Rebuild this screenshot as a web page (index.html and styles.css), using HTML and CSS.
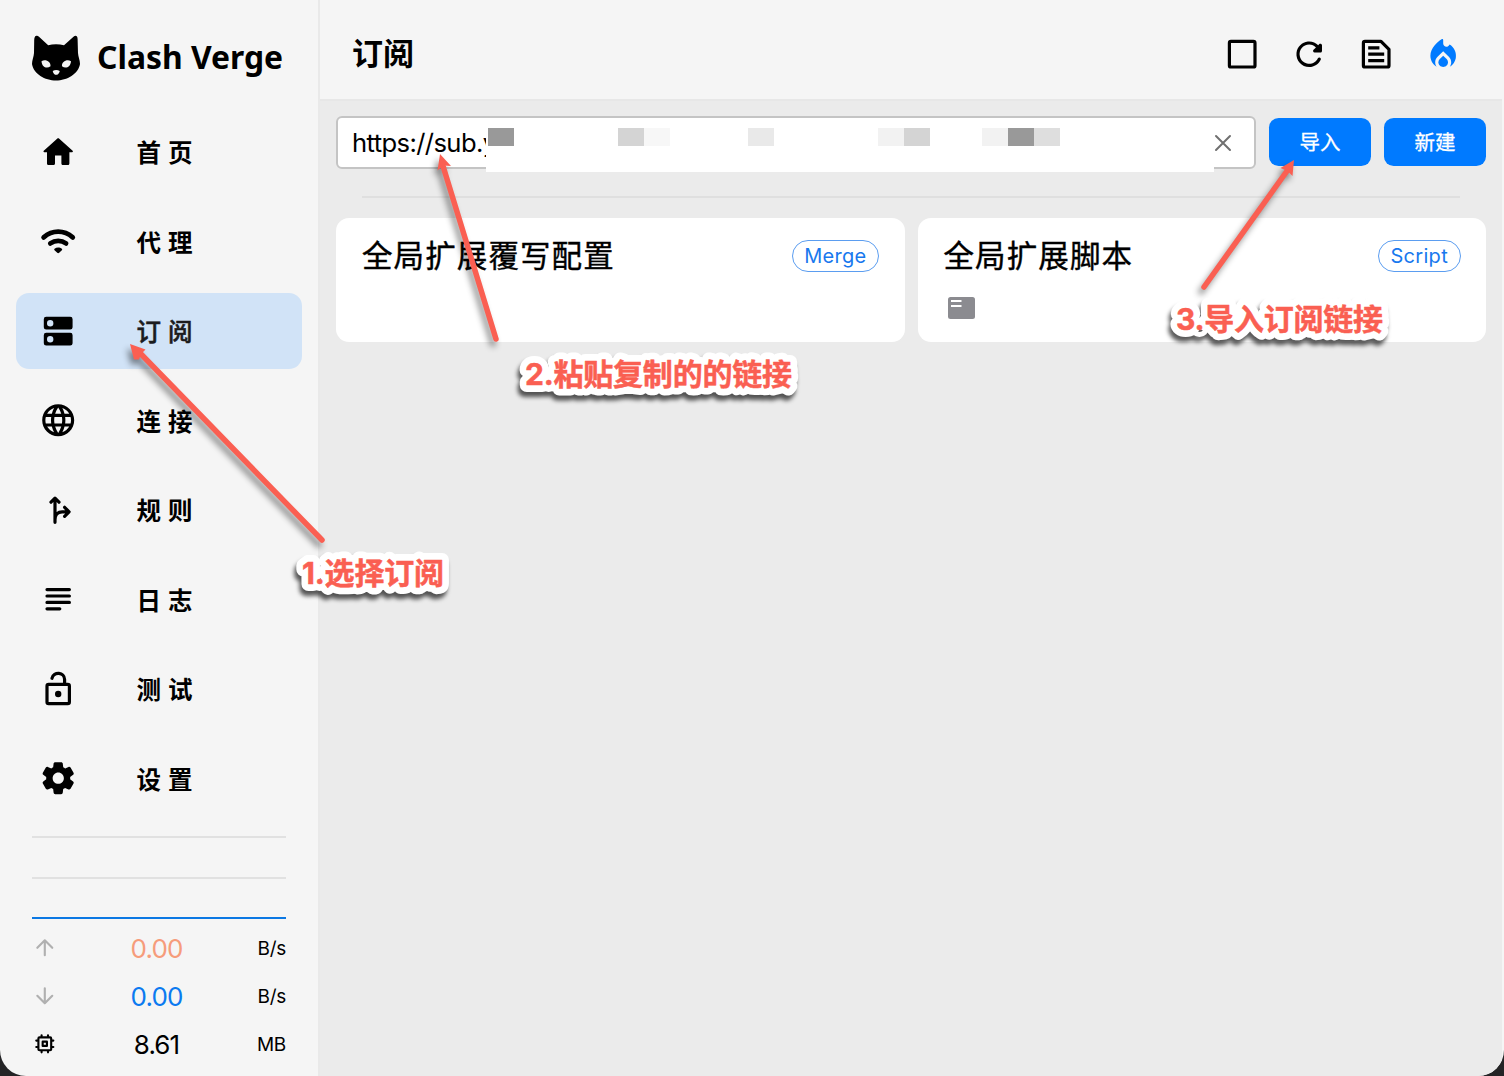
FILE: index.html
```
<!DOCTYPE html>
<html lang="zh-CN">
<head>
    <meta charset="UTF-8">
    <meta name="viewport" content="width=device-width, initial-scale=1.0">
    <title>Clash Verge - 订阅</title>
    <link rel="stylesheet" href="styles.css">
</head>
<body>
<div class="app">
    <aside class="sidebar">
        <div class="logo">
            <svg class="logo-cat" viewBox="0 0 48 46">
                <path d="M5 .8C3 .4 2.400 2.500 2.200 5L2 18C1.800 22 0 25 0 29C1.500 39 13 45.500 24 45.500S46.500 39 48 29C48 25 46.200 22 46 18L45.600 4C45.500 .8 43.500 0 41.500 1.800L32 10.200C27 8.900 21 8.900 16.200 10.200L7 1.800C6.300 1.200 5.600 .8 5 .8Z"/>
                <path class="eye" d="M9.500 26.200C13.500 23.900 19 26.500 18.500 31.300C15 34 10 32.500 9.500 26.200ZM39 26.200C35 23.900 29.500 26.500 30 31.300C33.500 34 38.500 32.500 39 26.200ZM20.700 36C23 34.700 25.500 34.700 27.800 36C27.200 39 25.500 39.800 24.200 39.800S21.200 39 20.700 36Z"/>
            </svg>
            <svg class="logo-name" viewBox="0 0 200 50"><text x="0" y="34" textLength="186" lengthAdjust="spacingAndGlyphs">Clash Verge</text></svg>
        </div>

        <nav class="menu">
            <a class="menu-item">
                <svg class="icon" viewBox="0 0 24 24"><path d="M10 19v-5h4v5c0 .55.45 1 1 1h3c.55 0 1-.45 1-1v-7h1.700c.46 0 .68-.57.33-.87L12.670 3.600c-.38-.34-.96-.34-1.340 0l-8.360 7.530c-.34.3-.13.87.33.87H5v7c0 .55.45 1 1 1h3c.55 0 1-.45 1-1z"/></svg>
                <span>首页</span>
            </a>
            <a class="menu-item">
                <svg class="icon" viewBox="0 0 24 24"><path class="line wide" d="M2.900 9.600C8.400 4.900 15.600 4.900 21.100 9.600M7.100 13.400C10 11.200 14 11.200 16.900 13.400"/><path d="M9.700 16.700c1.300-1.100 3.300-1.100 4.600 0 .3.3.3.600 0 .9l-1.700 1.700c-.4.400-.8.400-1.200 0l-1.700-1.700c-.3-.3-.3-.6 0-.9z"/></svg>
                <span>代理</span>
            </a>
            <a class="menu-item active">
                <svg class="icon" viewBox="0 0 24 24"><path fill-rule="evenodd" d="M4.500 3h15A1.500 1.500 0 0 1 21 4.500v5a1.500 1.500 0 0 1-1.500 1.500h-15A1.500 1.500 0 0 1 3 9.500v-5A1.500 1.500 0 0 1 4.500 3zM7 5a2 2 0 1 0 0 4 2 2 0 0 0 0-4zM4.500 13h15a1.500 1.500 0 0 1 1.500 1.500v5a1.500 1.500 0 0 1-1.500 1.500h-15A1.500 1.500 0 0 1 3 19.500v-5A1.500 1.500 0 0 1 4.500 13zM7 15a2 2 0 1 0 0 4 2 2 0 0 0 0-4z"/></svg>
                <span>订阅</span>
            </a>
            <a class="menu-item">
                <svg class="icon" viewBox="0 0 24 24"><path d="M11.990 2C6.470 2 2 6.480 2 12s4.470 10 9.990 10C17.520 22 22 17.520 22 12S17.520 2 11.990 2zm6.930 6h-2.950c-.32-1.250-.78-2.450-1.380-3.560 1.840.63 3.370 1.910 4.330 3.560zM12 4.040c.83 1.200 1.480 2.530 1.910 3.960h-3.820c.43-1.430 1.080-2.760 1.910-3.960zM4.260 14C4.100 13.360 4 12.690 4 12s.1-1.360.26-2h3.380c-.08.66-.14 1.320-.14 2s.06 1.340.14 2H4.260zm.82 2h2.950c.32 1.250.78 2.450 1.380 3.560-1.840-.63-3.370-1.900-4.330-3.560zm2.950-8H5.080c.96-1.660 2.490-2.930 4.330-3.560C8.810 5.550 8.350 6.750 8.030 8zM12 19.960c-.83-1.200-1.480-2.530-1.910-3.960h3.820c-.43 1.430-1.080 2.760-1.910 3.960zM14.340 14H9.660c-.09-.66-.16-1.320-.16-2s.07-1.350.16-2h4.680c.09.65.16 1.320.16 2s-.07 1.340-.16 2zm.25 5.560c.6-1.110 1.060-2.310 1.380-3.560h2.950c-.96 1.650-2.490 2.930-4.330 3.560zM16.360 14c.08-.66.14-1.320.14-2s-.06-1.340-.14-2h3.380c.16.64.26 1.310.26 2s-.1 1.360-.26 2h-3.380z"/></svg>
                <span>连接</span>
            </a>
            <a class="menu-item">
                <svg class="icon" viewBox="0 0 24 24"><path class="line" d="M10 19.600V5.200M7.500 7L10 4.500 12.500 7M10 18C10 14.500 12 13 14.500 13H18M16 10.200L18.800 13 16 15.800"/></svg>
                <span>规则</span>
            </a>
            <a class="menu-item">
                <svg class="icon" viewBox="0 0 24 24"><path class="line" d="M5 6H19M5 10H19M5 14H19M5 18H13"/></svg>
                <span>日志</span>
            </a>
            <a class="menu-item">
                <svg class="icon" viewBox="0 0 24 24"><rect class="line" x="5" y="9" width="14" height="12" rx="1"/><path class="line" d="M8.100 5.200C9.200 .8 16 1.200 16 6V9"/><circle cx="12" cy="15" r="2"/></svg>
                <span>测试</span>
            </a>
            <a class="menu-item">
                <svg class="icon" viewBox="0 0 24 24"><path d="M19.500 12c0-.23-.01-.45-.03-.68l1.860-1.410c.4-.3.510-.86.26-1.300l-1.870-3.230c-.25-.44-.79-.62-1.250-.42l-2.150.91c-.37-.26-.76-.49-1.170-.68l-.29-2.310c-.06-.5-.49-.88-.99-.88h-3.730c-.51 0-.94.38-1 .88l-.29 2.310c-.41.190-.8.420-1.170.68l-2.150-.91c-.46-.2-1-.02-1.250.42L2.410 8.620c-.25.440-.14.990.26 1.300l1.860 1.410c-.02.22-.03.44-.03.67s.01.450.03.68l-1.860 1.410c-.4.3-.51.860-.26 1.300l1.870 3.230c.25.44.79.62 1.250.42l2.150-.91c.37.26.76.49 1.170.68l.29 2.310c.06.5.49.88.99.88h3.730c.5 0 .93-.38.990-.88l.29-2.310c.41-.19.8-.42 1.170-.68l2.150.91c.46.2 1 .02 1.250-.42l1.870-3.230c.25-.44.140-.99-.26-1.300l-1.860-1.410c.03-.23.04-.45.04-.68zm-7.460 3.500c-1.930 0-3.500-1.570-3.500-3.500s1.570-3.500 3.500-3.500 3.500 1.570 3.500 3.500-1.570 3.500-3.500 3.500z"/></svg>
                <span>设置</span>
            </a>
        </nav>

        <div class="traffic">
            <div class="graph"></div>
            <div class="traffic-row">
                <svg class="small-icon muted" viewBox="0 0 24 24"><path class="line" d="M12 19V5M5 12L12 5 19 12"/></svg>
                <span class="value up">0.00</span>
                <span class="unit">B/s</span>
            </div>
            <div class="traffic-row">
                <svg class="small-icon muted" viewBox="0 0 24 24"><path class="line" d="M12 5V19M5 12L12 19 19 12"/></svg>
                <span class="value down">0.00</span>
                <span class="unit">B/s</span>
            </div>
            <div class="traffic-row">
                <svg class="small-icon" viewBox="0 0 24 24"><rect class="line" x="6" y="6" width="12" height="12" rx="1"/><rect class="line" x="10" y="10" width="4" height="4"/><path class="line" d="M9 5V4M15 5V4M9 20V19M15 20V19M4 9H5M4 15H5M19 9H20M19 15H20"/></svg>
                <span class="value">8.61</span>
                <span class="unit">MB</span>
            </div>
        </div>
    </aside>

    <main class="content">
        <header class="header">
            <h1>订阅</h1>
            <div class="actions">
                <svg class="icon" viewBox="0 0 24 24"><rect class="line" x="4" y="4" width="16" height="16" rx="1"/></svg>
                <svg class="icon" viewBox="0 0 24 24"><path d="M17.650 6.350c-1.630-1.630-3.940-2.570-6.480-2.310-3.670.37-6.690 3.350-7.100 7.020C3.520 15.910 7.270 20 12 20c3.190 0 5.930-1.870 7.210-4.560.32-.67-.16-1.440-.9-1.440-.37 0-.72.2-.88.53-1.130 2.430-3.840 3.970-6.800 3.310-2.220-.49-4.010-2.300-4.480-4.520C5.310 9.440 8.260 6 12 6c1.660 0 3.140.69 4.220 1.780l-1.510 1.510c-.63.63-.19 1.710.7 1.710H19c.55 0 1-.45 1-1V6.410c0-.89-1.080-1.340-1.710-.71l-.64.65z"/></svg>
                <svg class="icon" viewBox="0 0 24 24"><path class="line" d="M5 4H15L20 9V19Q20 20 19 20H5Q4 20 4 19V5Q4 4 5 4Z"/><path class="line flat" d="M7 8H14M7 12H17M7 16H17"/></svg>
                <svg class="icon blue" viewBox="0 0 24 24"><path d="M12 12.900l-2.130 2.090C9.310 15.550 9 16.280 9 17.060 9 18.680 10.350 20 12 20s3-1.320 3-2.940c0-.78-.31-1.520-.87-2.070L12 12.900z"/><path d="M16 6l-.44.55C14.380 8.020 12 7.190 12 5.300V3.200c0-.7-.5-.9-1-.6C8.600 4.200 4 7.800 4 13c0 2.920 1.560 5.470 3.890 6.860-.56-.79-.89-1.760-.89-2.800 0-1.320.52-2.560 1.470-3.500L12 10.100l3.530 3.470c.95.93 1.470 2.170 1.470 3.500 0 1.020-.31 1.960-.85 2.750 1.890-1.150 3.290-3.060 3.710-5.300.66-3.550-1.070-6.900-3.860-8.520z"/></svg>
            </div>
        </header>

        <section class="import-bar">
            <div class="url-box">
                <span class="url">https://sub.y</span>
                <svg class="clear" viewBox="0 0 24 24"><path class="line" d="M5 5L19 19M19 5L5 19"/></svg>
                <div class="mosaic">
                    <i class="c1 g1"></i><i class="c6 g2"></i><i class="c7 g5"></i><i class="c11 g3"></i><i class="c16 g4"></i><i class="c17 g2"></i><i class="c20 g4"></i><i class="c21 g1"></i><i class="c22 g6"></i>
                </div>
            </div>
            <button class="btn">导入</button>
            <button class="btn">新建</button>
        </section>

        <hr class="divider">

        <section class="cards">
            <div class="card">
                <div class="card-top">
                    <h2>全局扩展覆写配置</h2>
                    <span class="tag">Merge</span>
                </div>
            </div>
            <div class="card">
                <div class="card-top">
                    <h2>全局扩展脚本</h2>
                    <span class="tag">Script</span>
                </div>
                <svg class="card-icon" viewBox="0 0 27 22"><rect width="27" height="22" rx="2.500"/><path class="bars" d="M3 4H13.500M3 9H13.500"/></svg>
            </div>
        </section>
    </main>

    <!-- tutorial notes over the window -->
    <svg class="notes" viewBox="0 0 1504 1076">
        <g class="arrow">
            <path class="shaft" d="M322 540L140 353"/>
            <path d="M130 344L145.500 349.500 141 354 139 359.500 134 359.500Z"/>
            <path class="shaft" d="M496 339L443 166"/>
            <path d="M440 154L451 166 443.500 165.500 437.500 170.500Z"/>
            <path class="shaft" d="M1204 287L1287 171"/>
            <path d="M1294 160L1292.500 176 1287.500 171 1280.500 168Z"/>
        </g>
        <!-- white halo first, the letters themselves on top -->
        <use class="halo" href="#labels"/>
        <g id="labels">
            <text x="302" y="584" textLength="142">1.选择订阅</text>
            <text x="525" y="385" textLength="267">2.粘贴复制的的链接</text>
            <text x="1176" y="330" textLength="207">3.导入订阅链接</text>
        </g>
    </svg>
</div>
</body>
</html>
```
FILE: styles.css
```
* { box-sizing: border-box; }
body {
    margin: 0;
    background: #242426;
    color: #000;
    font-family: Inter, "Noto Sans CJK SC", sans-serif;
}
.app {
    position: relative;
    display: flex;
    width: 1504px;
    height: 1076px;
    background: #f5f5f5;
    border-radius: 0 0 26px 26px;
    overflow: hidden;
}
svg { display: block; flex: none; }
.line {
    fill: none;
    stroke: currentColor;
    stroke-width: 2;
    stroke-linecap: round;
    stroke-linejoin: round;
}
.line.wide { stroke-width: 3; }
.line.flat { stroke-linecap: butt; }
.icon { width: 38.4px; height: 38.4px; fill: currentColor; }
.blue { color: #007aff; }

/* sidebar */
.sidebar {
    width: 320px;
    border-right: 2px solid #e9e9e9;
    display: flex;
    flex-direction: column;
}
.logo { display: flex; height: 114px; padding: 34.5px 0 0 32px; }
.logo-cat { width: 48px; height: 46px; }
.logo-cat .eye { fill: #f5f5f5; }
.logo-name { width: 200px; height: 50px; margin-left: 16.5px; overflow: visible; }
.logo-name text { font: bold 33px "Noto Sans", sans-serif; }
.menu {
    display: flex;
    flex-direction: column;
    gap: 13.5px;
    padding: 0 16px;
}
.menu-item {
    display: flex;
    align-items: center;
    height: 76px;
    padding-left: 23px;
    border-radius: 13px;
}
.menu-item span {
    margin-left: 59px;
    padding-top: 2px;
    font-size: 24.500px;
    font-weight: 700;
    letter-spacing: 7px;
    line-height: 36px;
}
.menu-item.active { background: #d1e3f7; }
.menu-item.active span {
    color: #1c1c1e;
    font-weight: 500;
    -webkit-text-stroke: 0.5px #1c1c1e;
}

.traffic { margin: 19.5px 32px 0; }
.graph {
    height: 83px;
    border-top: 2px solid #e1e1e1;
    border-bottom: 2px solid #0b78e3;
    background: linear-gradient(#e1e1e1, #e1e1e1) 0 39px / 100% 2px no-repeat;
}
.traffic-row {
    display: grid;
    grid-template-columns: 26px 1fr 66px;
    align-items: center;
    height: 48px;
    position: relative;
    top: 5px;
}
.small-icon { width: 25.6px; height: 25.6px; }
.muted { color: #b0b0b0; }
.value {
    padding-left: 35px;
    text-align: center;
    font-size: 26px;
    letter-spacing: -0.9px;
}
.unit { text-align: right; font-size: 19px; letter-spacing: -0.3px; }
.up { color: #f69c7b; }
.down { color: #0b7af0; }

/* content */
.content { width: 1182px; background: #ebebeb; }
.header {
    display: flex;
    align-items: center;
    justify-content: space-between;
    height: 101px;
    padding: 0 39.5px 0 32px;
    background: #f5f5f5;
    border-bottom: 2px solid #e7e7e7;
}
h1 { margin: 0; padding-top: 8px; font-size: 31px; font-weight: 700; line-height: 46px; }
.actions { display: flex; gap: 28.8px; padding-top: 10px; }

.import-bar {
    display: flex;
    align-items: flex-start;
    gap: 13px;
    padding: 15px 16px 0;
}
.url-box {
    position: relative;
    display: flex;
    align-items: center;
    justify-content: space-between;
    width: 920px;
    height: 53px;
    padding: 0 19px 0 14px;
    background: #fff;
    border: 2px solid #c4c4c4;
    border-radius: 6px;
}
.url { font-size: 25.600px; letter-spacing: -0.6px; }
.clear { position: relative; z-index: 1; width: 24px; height: 24px; color: #707070; }
/* censored part of the link, spills a little under the field */
.mosaic {
    position: absolute;
    left: 148px;
    top: 0;
    width: 728px;
    height: 54px;
    display: grid;
    grid-template-columns: repeat(28, 26px);
    grid-template-rows: 18px;
    padding: 10px 0 0 2px;
    background: #fff;
    overflow: hidden;
}
.mosaic i { grid-row: 1; }
.c1 { grid-column: 1; }
.c6 { grid-column: 6; }
.c7 { grid-column: 7; }
.c11 { grid-column: 11; }
.c16 { grid-column: 16; }
.c17 { grid-column: 17; }
.c20 { grid-column: 20; }
.c21 { grid-column: 21; }
.c22 { grid-column: 22; }
.g1 { background: #999; }
.g2 { background: #d4d4d4; }
.g3 { background: #e9e9e9; }
.g4 { background: #f2f2f2; }
.g5 { background: #f7f7f7; }
.g6 { background: #dedede; }

.btn {
    width: 102px;
    height: 48px;
    margin-top: 2px;
    padding: 1px 0 0;
    border: 0;
    border-radius: 9.600px;
    background: #007aff;
    color: #fff;
    font: 400 20.500px/30px Inter, "Noto Sans CJK SC", sans-serif;
    -webkit-text-stroke: 0.3px #fff;
}
.divider { margin: 27px 42px 0; border: 0; border-top: 2px solid #dfdfdf; }
.cards {
    display: grid;
    grid-template-columns: 1fr 1fr;
    gap: 13px;
    padding: 20px 16px;
}
.card {
    height: 124px;
    padding: 14px 25.5px 0 26px;
    background: #fff;
    border-radius: 13px;
}
.card-top { display: flex; align-items: center; justify-content: space-between; height: 47px; }
h2 {
    margin: 0;
    font-size: 30.500px;
    font-weight: 400;
    letter-spacing: 1.100px;
    line-height: 46px;
    -webkit-text-stroke: 0.4px #000;
}
.tag {
    height: 32px;
    padding: 0 11.500px;
    border: 1.500px solid #5b9df0;
    border-radius: 16px;
    color: #1878ee;
    font-size: 20px;
    letter-spacing: 0.3px;
    line-height: 30px;
}
.card-icon { width: 27px; height: 22px; margin: 18px 0 0 4px; fill: #8b8b90; }
.bars { stroke: #fff; stroke-width: 2.200; }

/* notes */
.notes { position: absolute; left: 0; top: 0; width: 1504px; height: 1076px; pointer-events: none; }
.arrow { fill: #fa5f52; filter: drop-shadow(-3px 5px 3px rgba(0, 0, 0, .45)); }
.shaft { stroke: #fa5f52; stroke-width: 5.500; stroke-linecap: round; }
.notes text { font-size: 30px; font-weight: 700; }
#labels { fill: #fa5f52; stroke-width: 0.5; stroke: #fa5f52; }
.notes text { fill: inherit; }
.halo { filter: drop-shadow(-2px 5px 2px rgba(0, 0, 0, .65)); }
.halo, .notes .halo { --ink: #fff; --edge: 14px; }
#labels text {
    fill: var(--ink, #fa5f52);
    stroke: var(--ink, #fa5f52);
    stroke-width: var(--edge, 0.5px);
    stroke-linejoin: round;
}
```
